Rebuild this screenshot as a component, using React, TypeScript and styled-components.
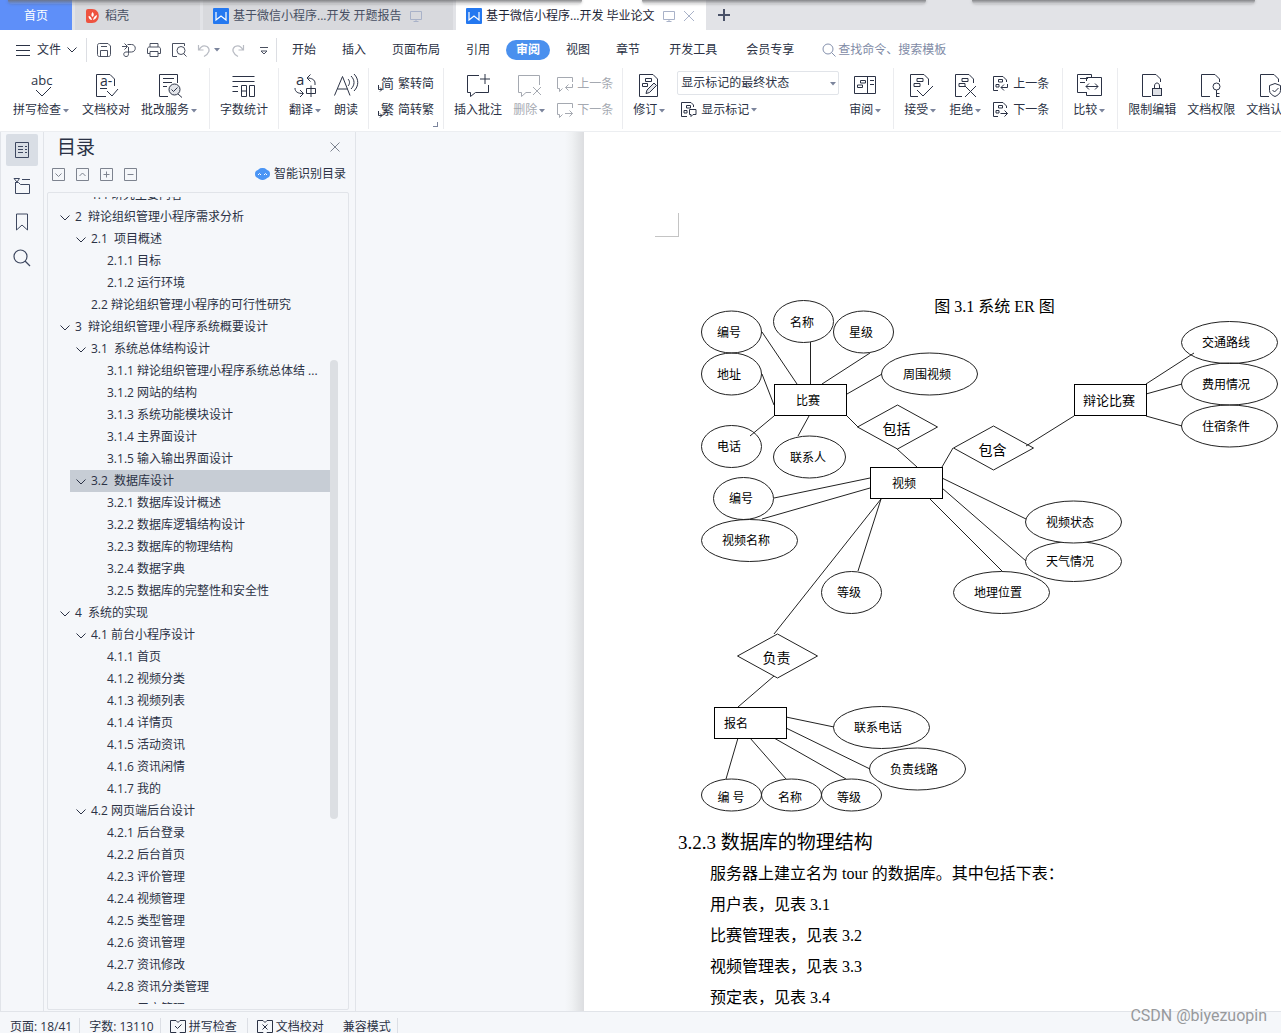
import React from "react";
import styled, { createGlobalStyle, css } from "styled-components";

const ink = "#2b3245";
const muted = "#a5a9b1";
const line = "#e1e4e9";
const paneBg = "#f5f7fa";

const GlobalStyle = createGlobalStyle`
  *, *::before, *::after { box-sizing: border-box; }
  body {
    margin: 0;
    font-family: "Open Sans", "Noto Sans CJK SC", sans-serif;
    font-size: 12px;
    line-height: 16px;
    color: ${ink};
    overflow: hidden;
  }
  button, input, select { font: inherit; color: inherit; }
  button { border: 0; padding: 0; background: none; white-space: nowrap; }
  ul { list-style: none; margin: 0; padding: 0; }
  svg { display: block; flex: none; overflow: visible; }
`;

const Shell = styled.div`
  position: relative;
  display: flex;
  flex-direction: column;
  height: 100vh;
  background: #fff;
`;

/* ---------- window tabs ---------- */

const TabStrip = styled.header`
  display: flex;
  gap: 3px;
  height: 30px;
  background: #e2e3e7;
`;

const Tab = styled.button<{ $kind?: "home" | "active"; $width: number }>`
  display: flex;
  align-items: center;
  gap: 4px;
  width: ${(p) => p.$width}px;
  padding: 1px 10px 0;
  background: #d8d9dd;
  color: #474f62;
  ${(p) => p.$kind === "home" && css`background: #5e8ff9; color: #fff; justify-content: center;`}
  ${(p) => p.$kind === "active" && css`background: #fff; color: #1d2435;`}
`;

const TabIcons = styled.span`
  display: flex;
  align-items: center;
  gap: 8px;
  margin-left: 4px;
  color: #a9b2c8;
`;

const AddTab = styled.button`
  display: grid;
  place-items: center;
  width: 30px;
  color: #4a5268;
`;

const TopShade = styled.div`
  position: absolute;
  top: 0;
  left: 0;
  right: 0;
  display: flex;
  padding: 0 26px 0 8px;
  height: 4px;
  pointer-events: none;
`;

const Shade = styled.span<{ $grow: number }>`
  flex: ${(p) => p.$grow} 0 0;
  border-radius: 0 0 4px 4px;
  background: linear-gradient(rgba(110, 111, 114, 0.8), rgba(150, 150, 152, 0.2));
  box-shadow: 0 0 3px rgba(90, 90, 90, 0.4);
`;

const ShadeGap = styled.span<{ $grow: number }>`
  flex: ${(p) => p.$grow} 0 0;
`;

/* ---------- menu bar ---------- */

const MenuBar = styled.div`
  display: flex;
  align-items: center;
  height: 37px;
  padding: 2px 0 0 15px;
`;

const FileButton = styled.button`
  display: flex;
  align-items: center;
  gap: 6px;
`;

const Divider = styled.span<{ $lead: number }>`
  width: 1px;
  height: 24px;
  margin-left: ${(p) => p.$lead}px;
  background: #dcdee3;
`;

const QuickTools = styled.div`
  display: flex;
  align-items: center;
  gap: 9px;
  padding-left: 9px;
  color: #4a5060;
`;

const QuickButton = styled.button<{ $faded?: boolean }>`
  display: flex;
  align-items: center;
  color: ${(p) => (p.$faded ? "#b9bcc4" : "inherit")};
`;

const MenuNav = styled.nav`
  display: flex;
  align-items: center;
  margin-left: 2px;
`;

const MenuItem = styled.button<{ $spaced?: boolean }>`
  height: 20px;
  padding: 0 13px 0 ${(p) => (p.$spaced ? 16 : 13)}px;
  &[aria-current="page"] {
    margin: 0 3px;
    padding: 0 10px;
    border-radius: 10px;
    background: #4a90ee;
    color: #fff;
    font-weight: 700;
  }
`;

const SearchBox = styled.label`
  display: flex;
  align-items: center;
  gap: 2px;
  margin-left: 15px;
  color: #8591ad;
  input {
    width: 160px;
    height: 20px;
    border: 0;
    padding: 0;
    outline: 0;
    background: none;
  }
  input::placeholder { color: #7f8ba6; opacity: 1; }
`;

/* ---------- ribbon ---------- */

const Ribbon = styled.div`
  position: relative;
  z-index: 1;
  display: flex;
  height: 65px;
  padding: 1px 0 2px 3px;
  overflow: hidden;
  border-bottom: 1px solid #eceef1;
  flex: none;
`;

const Group = styled.div`
  display: flex;
  flex: none;
  align-items: flex-start;
  gap: 11px;
  padding: 4px 10px 0;
  position: relative;
  & + & { border-left: 1px solid #ebecef; }
`;

const BigButton = styled.button<{ $off?: boolean }>`
  display: flex;
  flex-direction: column;
  align-items: center;
  gap: 4px;
  color: ${(p) => (p.$off ? muted : ink)};
  > svg { margin: 0 -1px; }
`;

const LabelRow = styled.span`
  display: flex;
  align-items: center;
`;

const CaretBox = styled.span`
  display: flex;
  justify-content: center;
  width: 10px;
  color: #7b849c;
`;

const SmallStack = styled.div<{ $min?: number }>`
  display: flex;
  flex-direction: column;
  gap: 2px;
  margin: -1px -1px 0;
  min-width: ${(p) => p.$min ?? 0}px;
`;

const SmallButton = styled.button<{ $off?: boolean; $inset?: boolean }>`
  display: flex;
  align-items: center;
  gap: 4px;
  height: 24px;
  padding: 1px 0 0 ${(p) => (p.$inset ? 4 : 0)}px;
  color: ${(p) => (p.$off ? muted : ink)};
`;

const SelectWrap = styled.label`
  position: relative;
  display: flex;
  align-items: center;
  select {
    appearance: none;
    width: 162px;
    height: 24px;
    padding: 0 20px 0 3px;
    border: 1px solid ${line};
    border-radius: 2px;
    background: #fff;
    outline: 0;
  }
  ${CaretBox} {
    position: absolute;
    right: 1px;
    pointer-events: none;
  }
`;

const Launcher = styled.span`
  position: absolute;
  right: 5px;
  bottom: 2px;
  width: 5px;
  height: 5px;
  border: solid #7b849c;
  border-width: 0 1px 1px 0;
`;

/* ---------- body ---------- */

const Body = styled.main`
  display: flex;
  flex: 1;
  min-height: 0;
  background: ${paneBg};
  border-left: 1px solid ${line};
`;

const Rail = styled.nav`
  display: flex;
  flex-direction: column;
  gap: 4px;
  width: 42px;
  padding: 2px 5px;
  color: #3e4860;
  flex: none;
`;

const RailButton = styled.button<{ $on?: boolean }>`
  display: grid;
  place-items: center;
  width: 32px;
  height: 32px;
  border-radius: 2px;
  background: ${(p) => (p.$on ? "#d9dee5" : "none")};
`;

const Outline = styled.aside`
  display: flex;
  flex-direction: column;
  flex: none;
  width: 313px;
  padding: 0 6px 1px 3px;
  border: solid ${line};
  border-width: 0 1px;
`;

const OutlineHead = styled.div`
  display: flex;
  align-items: center;
  justify-content: space-between;
  height: 30px;
  padding: 0 9px 0 10px;
  h2 {
    margin: 0;
    font-size: 19px;
    line-height: 28px;
    font-weight: 400;
  }
  button { color: #7d838f; }
`;

const OutlineTools = styled.div`
  display: flex;
  align-items: center;
  gap: 11px;
  height: 30px;
  padding: 0 3px 6px 5px;
  color: #7d838f;
`;

const SmartButton = styled.button`
  display: flex;
  align-items: center;
  gap: 4px;
  margin-left: auto;
  color: ${ink};
`;

const TreeBox = styled.div`
  display: flex;
  flex: 1;
  min-height: 0;
  padding: 4px 10px 5px 6px;
  border: 1px solid ${line};
  border-radius: 2px;
`;

const TreeView = styled.div`
  flex: 1;
  min-width: 0;
  overflow: hidden;
  ul { margin-top: -13px; }
`;

const TreeRow = styled.li<{ $level: number; $on?: boolean }>`
  display: flex;
  align-items: center;
  height: 22px;
  margin-left: ${(p) => (p.$level - 1) * 16}px;
  background: ${(p) => (p.$on ? "#c7cdd5" : "none")};
  a {
    color: inherit;
    text-decoration: none;
    white-space: pre;
  }
`;

const Twist = styled.span`
  display: flex;
  justify-content: center;
  width: 21px;
  flex: none;
  padding-top: 2px;
`;

const ScrollTrack = styled.div`
  display: flex;
  flex-direction: column;
  width: 8px;
  padding-top: 2px;
`;

const ScrollThumb = styled.span`
  flex: 0 0 57%;
  border-radius: 4px;
  background: #dcdfe3;
`;

const ScrollLead = styled.span`
  flex: 0 0 20%;
`;

const Desk = styled.section`
  display: flex;
  flex: 1;
  min-width: 0;
  overflow: hidden;
`;

const Gutter = styled.div`
  flex: none;
  width: 228px;
  background: linear-gradient(to left, #dcdde0 0, #e5e7e9 6px, #eff1f3 12px, ${paneBg} 19px);
`;

const Paper = styled.article`
  flex: none;
  width: 821px;
  padding: 81px 94px 0;
  background: #fff;
  color: #000;
  font-family: "Liberation Serif", "Noto Sans CJK SC", serif;
  font-size: 16px;
  line-height: 31px;
  h3 {
    margin: 0;
    font-size: 19px;
    line-height: 31px;
    font-weight: 400;
  }
  p { margin: 0; text-indent: 2em; }
`;

const CropMark = styled.div`
  width: 24px;
  height: 24px;
  margin: 0 0 54px -23px;
  border: solid #c4c4c4;
  border-width: 0 1px 1px 0;
`;

const Figure = styled.figure`
  margin: 0;
  figcaption { text-align: center; }
  svg { margin-top: -26px; }
  text {
    font-family: "Liberation Serif", "Noto Sans CJK SC", serif;
    fill: #000;
    stroke: none;
    text-anchor: middle;
  }
`;

/* ---------- status bar ---------- */

const StatusBar = styled.footer`
  position: relative;
  flex: none;
  height: 22px;
  border-top: 1px solid ${line};
  background: ${paneBg};
`;

const StatusItems = styled.div`
  display: flex;
  align-items: center;
  height: 30px;
  padding-left: 10px;
`;

const StatusItem = styled.button<{ $bar?: boolean; $pad: number }>`
  display: flex;
  align-items: center;
  gap: 3px;
  height: 18px;
  margin-right: 9px;
  padding-right: ${(p) => p.$pad}px;
  border-right: 1px solid ${(p) => (p.$bar ? "#dcdfe5" : "transparent")};
`;

const Watermark = styled.span`
  position: absolute;
  right: 14px;
  top: -7px;
  font-family: Roboto, "Open Sans", sans-serif;
  font-size: 16px;
  line-height: 22px;
  color: #97999c;
`;

/* ---------- icons ---------- */

type IconProps = { w?: number; h?: number; d?: string; sw?: number; children?: React.ReactNode };

const Icon = ({ w = 26, h = w, d, sw = 1, children }: IconProps) => (
  <svg width={w} height={h} viewBox={`0 0 ${w} ${h}`} fill="none" stroke="currentColor" strokeWidth={sw} aria-hidden="true">
    {children}
    {d && <path d={d} />}
  </svg>
);

const Caret = () => (
  <CaretBox>
    <svg width="6" height="3" viewBox="0 0 6 3" aria-hidden="true"><path d="M0 0h6L3 3.500z" fill="currentColor" /></svg>
  </CaretBox>
);

const glyph = { fill: "currentColor", stroke: "none" } as const;
const marks = "M9 6.500h6v3H9zM6 11.500h6v3H6z";
const page = "M12 24.500H3.500V2.500H17L21.500 7V10";

const icons: Record<string, React.ReactNode> = {
  spell: <Icon d="M7 18l6 6 9-9"><text x="2" y="13" fontSize="13" {...glyph}>abc</text></Icon>,
  proof: <Icon d="M13 24.500H3.500V2.500H17L21.500 7V14M7 16.500h7M14 19l5 5 6-7"><text x="7" y="14" fontSize="14" {...glyph}>a-</text></Icon>,
  review: (
    <Icon d="M11 24.500H2.500V2.500H20.500V11M6 6.500H17M6 10.500H15M6 14.500H10M21 22l4 3.500M14.500 17.500l2 2 4-4">
      <circle cx="17.500" cy="17.500" r="5.500" fill="#e3e5ea" />
    </Icon>
  ),
  count: <Icon d="M1.500 4.500H23.500M1.500 9.500H23.500M1.500 14.500H7M1.500 19.500H7M10.500 13.500h5v11h-5zM10.500 19h5M18.500 13.500h5v11h-5z" />,
  translate: (
    <Icon d="M22 13V11C22 8 19 6 14 6M17.500 2.500L14 6l3.500 3.500M2 16C2 20 5 21.500 10 21.500M7 18l3.500 3.500L7 25M13.500 16.500h9v5h-9zM18 13.500v11.500">
      <text x="3" y="13" fontSize="15" {...glyph}>a</text>
    </Icon>
  ),
  read: <Icon d="M1.500 23.500L9.500 4.500 17 23.500M4.500 17H14.500M15 7c2 2 2 5 0 7M18 4c4 4 4 9 0 13M21 2c5 5 5 12 0 17" />,
  insert: <Icon d="M14 3.500H2.500V20.500H5.500V24.500L10.500 20.500H23.500V13M20 2v10M15 7h10" />,
  remove: <Icon d="M22.500 13V3.500H1.500V20.500H4.500V24.500L9 20.500H14M16 15l8 8M24 15l-8 8" />,
  track: (
    <Icon d="M2.500 2.500H16L20.500 7V24.500H2.500zM8.500 6.500h6v3h-6zM5.500 11.500h5v3h-5z">
      <path d="M9 21.500l1-3.500 7-7 2.500 2.500-7 7z" fill="#e3e5ea" />
    </Icon>
  ),
  pane: <Icon d="M1.500 4.500H22.500V21.500H1.500zM14.500 4.500v17M17 8.500h4M17 12.500h4M7.500 8.500h5v2.500h-5zM4.500 13h5v2.500h-5z" />,
  accept: <Icon d={`M10 24.500H2.500V2.500H16L20.500 7V13${marks}M9 18l6 6 10-10`} />,
  reject: <Icon d={`M9 24.500H2.500V2.500H16L20.500 7V11${marks}M12 14l11 11M23 14L12 25`} />,
  compare: <Icon d="M9 20.500H.500V2.500H14.500V5M9.500 9V5.500H24.500V23.500H9.500V20M3 6.500h8M3 10.500h5M9 14.500H21M12 11.500l-3 3 3 3M18 11.500l3 3-3 3" />,
  limit: (
    <Icon d={`${page}M15.500 16.500V14c0-4 5-4 5 0v2.500`}>
      <rect x="13.500" y="16.500" width="9" height="7" fill="#dfe1e6" />
    </Icon>
  ),
  rights: <Icon d={`${page}M18.500 18v7M18.500 21.500h3M18.500 24.500h3`}><circle cx="18.500" cy="14.500" r="3.500" /></Icon>,
  certify: <Icon d={`${page}M18 11.500l5.500 2v5c0 3-3 5-5.500 6-2.500-1-5.500-3-5.500-6v-5zM15.500 18l2 2 4-4`} />,
  toSimple: <Icon w={16} d="M.500 9v4.500H4M2 11.500L4 13.500l-2 2"><text x="3" y="12" fontSize="13" {...glyph}>简</text></Icon>,
  toTrad: <Icon w={16} d="M.500 9v4.500H4M2 11.500L4 13.500l-2 2"><text x="3" y="12" fontSize="13" {...glyph}>繁</text></Icon>,
  prevNote: <Icon w={16} d="M15.500 6V1.500H.500V12.500H2.500V15.500L5.500 12.500M15.500 8v3.500H8.500M11.500 8.500l-3 3 3 3" />,
  nextNote: <Icon w={16} d="M15.500 6V1.500H.500V12.500H2.500V15.500L5.500 12.500M8 11.500H15.500M12.500 8.500l3 3-3 3" />,
  showMarks: <Icon w={16} d="M6 14.500H.500V.500H10L12.500 3V5M5.500 3.500h4V6h-4zM3 8.500h3v2.500H3zM8.500 7.500h6.500v5h-3l-2 2v-2h-1.500z" />,
  prevEdit: <Icon w={16} d="M5 14.500H.500V.500H10L13.500 4V6M5.500 3.500h4V6h-4zM3 8.500h3v2.500H3zM14.500 8v3.500H8M11 8.500l-3 3 3 3" />,
  nextEdit: <Icon w={16} d="M5 14.500H.500V.500H10L13.500 4V6M5.500 3.500h4V6h-4zM3 8.500h3v2.500H3zM7.500 11.500H14.500M11.500 8.500l3 3-3 3" />,
  menu: <Icon w={16} d="M1 3.500h14M1 8.500h14M1 13.500h14" />,
  chevron: <Icon w={10} h={6} d="M.500.500L5 5 9.500.500" />,
  save: <Icon w={16} d="M3.500 1.500H12L14.500 4v8.500c0 1-.5 2-2 2h-9c-1.500 0-2-1-2-2v-9c0-1 .5-2 2-2zM4.500 14V8.500h7V14M5 4.500h6" />,
  share: <Icon w={16} d="M1 4.500h5M3.500 1.500l3 3-3 3M6.500 2.500h4c5 0 5 7.500 0 7.500H5c-3 0-3 4.500 0 4.500 2 0 2.500-1 2.500-3V5" />,
  print: <Icon w={16} d="M4 5V1.500h8V5M4 11.500H1.500V7c0-1 .5-2 2-2h9c1.500 0 2 1 2 2v4.500H12M4 9.500h8v5H4z" />,
  preview: <Icon w={16} d="M6 14.500H1.500v-13h12V4M12.500 11.500l3 3"><circle cx="10" cy="8.500" r="4" /></Icon>,
  undo: <Icon w={16} sw={1.2} d="M2.500 3v5h5M3 8c2-4 5-5 8-3.500 4 3 2 7-3 10" />,
  redo: <Icon w={16} sw={1.2} d="M12.500 3v5h-5M12 8c-2-4-5-5-8-3.500-4 3-2 7 3 10" />,
  more: <Icon w={16} d="M4 5.500h8M5 9l3 3 3-3z" />,
  search: <Icon w={14} d="M9.500 9.500l4 4"><circle cx="6" cy="6" r="5" /></Icon>,
  close: <Icon w={12} d="M1 1l10 10M11 1L1 11" />,
  closeSmall: <Icon w={10} d="M.500.500l9 9M9.500.500l-9 9" />,
  screen: <Icon w={12} d="M.500 1.500h11v8H.500zM6 9.500v2M3.500 11.500h5" />,
  plus: <Icon w={14} sw={2} d="M7 1v12M1 7h12" />,
  railDoc: <Icon w={16} d="M1.500.500h13v15h-13zM4 4.500h5M4 7.500h5M4 10.500h5M11 4.500h2M11 7.500h2M11 10.500h2" />,
  railFolder: <Icon w={18} d="M1 1.500h5.500L4 5zM9 2.500h8M2.500 5v11.500h14v-9h-9l-2-2h-3" />,
  railMark: <Icon w={16} h={18} d="M2.500 1h11v16L8 12 2.500 17z" />,
  railSearch: <Icon w={18} sw={1.2} d="M12 12l5 5"><circle cx="7.500" cy="7.500" r="6.500" /></Icon>,
  expand: <Icon w={13} d="M.500.500h12v12H.500zM3.500 5.500l3 3 3-3" />,
  collapse: <Icon w={13} d="M.500.500h12v12H.500zM3.500 8l3-3 3 3" />,
  add: <Icon w={13} d="M.500.500h12v12H.500zM3.500 6.500h6M6.500 3.500v6" />,
  minus: <Icon w={13} d="M.500.500h12v12H.500zM3.500 6.500h6" />,
  bookCheck: <Icon w={16} d="M6 1.500H.500v12H6l2 2 2-2h5.500v-12H10l-2 2zM5 7l2.500 2.500 4-4" />,
  bookCross: <Icon w={16} d="M6 1.500H.500v12H6l2 2 2-2h5.500v-12H10l-2 2zM5.500 5.500l5 5M10.500 5.500l-5 5" />,
};

const WriterLogo = () => (
  <svg width="16" height="16" viewBox="0 0 16 16" aria-hidden="true">
    <rect width="16" height="16" rx="1" fill="#2478f0" />
    <path d="M3 4v8l5-4 5 4V4" fill="none" stroke="#fff" strokeWidth="1.200" />
  </svg>
);

const DocerLogo = () => (
  <svg width="16" height="14" viewBox="-1 0 16 14" aria-hidden="true">
    <path d="M0 2Q0 0 2 0h4c9 0 9 14 0 14H2Q0 14 0 12z" fill="#ee5340" />
    <path d="M6.500 3c2 2 1.500 4 0 5C5 7 5 5 6.500 3zM2.500 7c2 0 3 2 3.500 4-2 0-3.500-1.500-3.500-4zM11 6c-2 .5-3.500 2.500-4 5 2.500-.5 4-2.500 4-5z" fill="#fff" />
  </svg>
);

const SmartLogo = () => (
  <svg width="15" height="13" viewBox="0 0 15 13" aria-hidden="true">
    <rect x="2" y="0" width="11" height="12" rx="5" fill="#4a95f5" />
    <rect y="2" width="15" height="8" rx="4" fill="#4a95f5" />
    <path d="M3 7l1.500-1.500L6 7M9 7l1.500-1.500L12 7" fill="none" stroke="#fff" />
  </svg>
);

/* ---------- data ---------- */

type Node = [level: number, text: string, open?: boolean];

const outline: Node[] = [
  [2, "1.4 研究主要内容"],
  [1, "2  辩论组织管理小程序需求分析", true],
  [2, "2.1  项目概述", true],
  [3, "2.1.1 目标"],
  [3, "2.1.2 运行环境"],
  [2, "2.2 辩论组织管理小程序的可行性研究"],
  [1, "3  辩论组织管理小程序系统概要设计", true],
  [2, "3.1  系统总体结构设计", true],
  [3, "3.1.1 辩论组织管理小程序系统总体结 ..."],
  [3, "3.1.2 网站的结构"],
  [3, "3.1.3 系统功能模块设计"],
  [3, "3.1.4 主界面设计"],
  [3, "3.1.5 输入输出界面设计"],
  [2, "3.2  数据库设计", true],
  [3, "3.2.1 数据库设计概述"],
  [3, "3.2.2 数据库逻辑结构设计"],
  [3, "3.2.3 数据库的物理结构"],
  [3, "3.2.4 数据字典"],
  [3, "3.2.5 数据库的完整性和安全性"],
  [1, "4  系统的实现", true],
  [2, "4.1 前台小程序设计", true],
  [3, "4.1.1 首页"],
  [3, "4.1.2 视频分类"],
  [3, "4.1.3 视频列表"],
  [3, "4.1.4 详情页"],
  [3, "4.1.5 活动资讯"],
  [3, "4.1.6 资讯闲情"],
  [3, "4.1.7 我的"],
  [2, "4.2 网页端后台设计", true],
  [3, "4.2.1 后台登录"],
  [3, "4.2.2 后台首页"],
  [3, "4.2.3 评价管理"],
  [3, "4.2.4 视频管理"],
  [3, "4.2.5 类型管理"],
  [3, "4.2.6 资讯管理"],
  [3, "4.2.7 资讯修改"],
  [3, "4.2.8 资讯分类管理"],
  [3, "4.2.9 用户管理"],
];

const current = "3.2  数据库设计";

/* cx, cy, rx, ry, label, label x, label y */
const ellipses: [number, number, number, number, string, number, number][] = [
  [731.5, 332, 30, 21, "编号", 729, 332],
  [803.5, 321.5, 30, 21, "名称", 802, 322],
  [863.5, 332, 30, 21, "星级", 861, 332],
  [731.5, 374, 30, 21, "地址", 729, 374],
  [929.5, 374, 48, 21, "周围视频", 927, 374],
  [731.5, 446.5, 30, 21, "电话", 729, 446],
  [809.5, 457, 36, 21, "联系人", 808, 457],
  [743.5, 498.5, 30, 21, "编号", 741, 498],
  [749.5, 540.5, 48, 21, "视频名称", 746, 540],
  [851.5, 592.5, 30, 21, "等级", 849, 592],
  [1001.5, 592.5, 48, 21, "地理位置", 998, 592],
  [1073.5, 561.5, 48, 20, "天气情况", 1070, 561],
  [1073.5, 522, 48, 21, "视频状态", 1070, 522],
  [1229.5, 342.5, 48, 21, "交通路线", 1226, 342],
  [1229.5, 384, 48, 21, "费用情况", 1226, 384],
  [1229.5, 426, 48, 21, "住宿条件", 1226, 426],
  [881.5, 727.5, 48, 21, "联系电话", 878, 727],
  [917.5, 769, 48, 21, "负责线路", 914, 769],
  [731.5, 795, 30, 16, "编 号", 731, 797],
  [791.5, 795, 30, 16, "名称", 790, 797],
  [851.5, 795, 30, 16, "等级", 849, 797],
];

const boxes: [number, number, string, number, number, number][] = [
  [774.5, 384.5, "比赛", 808, 400, 12],
  [870.5, 467.5, "视频", 904, 483, 12],
  [1074.5, 384.5, "辩论比赛", 1109, 400, 13],
  [714.5, 707.5, "报名", 736, 723, 12],
];

const diamonds: [number, number, string][] = [
  [897.5, 427, "包括"],
  [993.5, 448, "包含"],
  [777.5, 656, "负责"],
];

const links =
  "M762 332L797 384M810.500 342V384M870 353L822 384M762 374L774 405M882 374L847 394" +
  "M774 416L750 436M809 416L798 436M847 416L858 427M897 449L917 467M942 467L953 448" +
  "M1026 446L1074 416M1146 384L1194 353M1146 394L1182 384M1146 416L1182 426" +
  "M774 498L870 478M762 519L870 488M881 499L774 634M881 499L858 571M930 499L1002 571" +
  "M942 478L1026 519M942 488L1026 561M774 676L738 707M786 717L834 727M786 728L870 769" +
  "M738 738L726 779M750 738L786 779M774 738L846 779";

const ErDiagram = () => (
  <svg width="633" height="531" viewBox="678 296 633 531" fill="#fff" stroke="#222" role="img" aria-label="系统 ER 图">
    {ellipses.map(([cx, cy, rx, ry, label, x, y], i) => (
      <g key={i}>
        <ellipse cx={cx} cy={cy} rx={rx} ry={ry} fill={label === "视频状态" ? "#fff" : "none"} />
        <text x={x} y={y + 5} fontSize="12">{label}</text>
      </g>
    ))}
    <path d={links} fill="none" />
    {diamonds.map(([cx, cy, label]) => (
      <g key={label}>
        <path d={`M${cx - 40} ${cy}l40-22 40 22-40 22z`} fill="none" />
        <text x={cx - 1} y={cy + 7} fontSize="14">{label}</text>
      </g>
    ))}
    {boxes.map(([x, y, label, tx, ty, size]) => (
      <g key={label}>
        <rect x={x} y={y} width="72" height="31" stroke="#000" />
        <text x={tx} y={ty + 5} fontSize={size}>{label}</text>
      </g>
    ))}
  </svg>
);

/* ---------- parts ---------- */

type ToolProps = { icon: string; label: string; caret?: boolean; off?: boolean; inset?: boolean };

const Big = ({ icon, label, caret, off }: ToolProps) => (
  <BigButton $off={off} disabled={off}>
    {icons[icon]}
    <LabelRow>{label}{caret && <Caret />}</LabelRow>
  </BigButton>
);

const Small = ({ icon, label, caret, off, inset }: ToolProps) => (
  <SmallButton $off={off} $inset={inset} disabled={off}>
    {icons[icon]}
    <LabelRow>{label}{caret && <Caret />}</LabelRow>
  </SmallButton>
);

const menus = ["开始", "插入", "页面布局", "引用", "审阅", "视图", "章节", "开发工具", "会员专享"];

export default function App() {
  return (
    <Shell>
      <GlobalStyle />
      <TabStrip>
        <Tab $kind="home" $width={72}>首页</Tab>
        <Tab $width={125}><DocerLogo />稻壳</Tab>
        <Tab $width={250}>
          <WriterLogo />基于微信小程序...开发 开题报告
          <TabIcons>{icons.screen}</TabIcons>
        </Tab>
        <Tab $kind="active" $width={250}>
          <WriterLogo />基于微信小程序...开发 毕业论文
          <TabIcons>{icons.screen}{icons.close}</TabIcons>
        </Tab>
        <AddTab aria-label="新建标签">{icons.plus}</AddTab>
      </TabStrip>
      <TopShade>
        <Shade $grow={574} /><ShadeGap $grow={60} /><Shade $grow={284} /><ShadeGap $grow={46} /><Shade $grow={283} />
      </TopShade>

      <MenuBar>
        <FileButton>{icons.menu}文件 {icons.chevron}</FileButton>
        <Divider $lead={9} />
        <QuickTools>
          <QuickButton aria-label="保存">{icons.save}</QuickButton>
          <QuickButton aria-label="输出">{icons.share}</QuickButton>
          <QuickButton aria-label="打印">{icons.print}</QuickButton>
          <QuickButton aria-label="打印预览">{icons.preview}</QuickButton>
          <QuickButton $faded aria-label="撤销">{icons.undo}<Caret /></QuickButton>
          <QuickButton $faded aria-label="恢复">{icons.redo}</QuickButton>
          <QuickButton aria-label="更多">{icons.more}</QuickButton>
        </QuickTools>
        <Divider $lead={4} />
        <MenuNav>
          {menus.map((m, i) => (
            <MenuItem key={m} $spaced={i > 6} aria-current={m === "审阅" ? "page" : undefined}>{m}</MenuItem>
          ))}
        </MenuNav>
        <SearchBox>
          {icons.search}
          <input type="text" placeholder="查找命令、搜索模板" aria-label="查找命令、搜索模板" />
        </SearchBox>
      </MenuBar>

      <Ribbon>
        <Group>
          <Big icon="spell" label="拼写检查" caret />
          <Big icon="proof" label="文档校对" />
          <Big icon="review" label="批改服务" caret />
        </Group>
        <Group><Big icon="count" label="字数统计" /></Group>
        <Group>
          <Big icon="translate" label="翻译" caret />
          <Big icon="read" label="朗读" />
        </Group>
        <Group>
          <SmallStack>
            <Small icon="toSimple" label="繁转简" />
            <Small icon="toTrad" label="简转繁" />
          </SmallStack>
          <Launcher />
        </Group>
        <Group>
          <Big icon="insert" label="插入批注" />
          <Big icon="remove" label="删除" caret off />
          <SmallStack>
            <Small icon="prevNote" label="上一条" off />
            <Small icon="nextNote" label="下一条" off />
          </SmallStack>
        </Group>
        <Group>
          <Big icon="track" label="修订" caret />
          <SmallStack>
            <SelectWrap>
              <select aria-label="显示状态" defaultValue="final">
                <option value="final">显示标记的最终状态</option>
              </select>
              <Caret />
            </SelectWrap>
            <Small icon="showMarks" label="显示标记" caret inset />
          </SmallStack>
          <Big icon="pane" label="审阅" caret />
        </Group>
        <Group>
          <Big icon="accept" label="接受" caret />
          <Big icon="reject" label="拒绝" caret />
          <SmallStack $min={60}>
            <Small icon="prevEdit" label="上一条" />
            <Small icon="nextEdit" label="下一条" />
          </SmallStack>
        </Group>
        <Group><Big icon="compare" label="比较" caret /></Group>
        <Group>
          <Big icon="limit" label="限制编辑" />
          <Big icon="rights" label="文档权限" />
          <Big icon="certify" label="文档认证" />
        </Group>
      </Ribbon>

      <Body>
        <Rail>
          <RailButton $on aria-label="目录">{icons.railDoc}</RailButton>
          <RailButton aria-label="章节">{icons.railFolder}</RailButton>
          <RailButton aria-label="书签">{icons.railMark}</RailButton>
          <RailButton aria-label="查找">{icons.railSearch}</RailButton>
        </Rail>
        <Outline>
          <OutlineHead>
            <h2>目录</h2>
            <button aria-label="关闭">{icons.closeSmall}</button>
          </OutlineHead>
          <OutlineTools>
            <button aria-label="展开">{icons.expand}</button>
            <button aria-label="收起">{icons.collapse}</button>
            <button aria-label="增加">{icons.add}</button>
            <button aria-label="减少">{icons.minus}</button>
            <SmartButton><SmartLogo />智能识别目录</SmartButton>
          </OutlineTools>
          <TreeBox>
            <TreeView>
              <ul>
                {outline.map(([level, text, open]) => (
                  <TreeRow key={text} $level={level} $on={text === current}>
                    <Twist>{open && icons.chevron}</Twist>
                    <a href="#outline">{text}</a>
                  </TreeRow>
                ))}
              </ul>
            </TreeView>
            <ScrollTrack><ScrollLead /><ScrollThumb /></ScrollTrack>
          </TreeBox>
        </Outline>
        <Desk>
          <Gutter />
          <Paper>
            <CropMark />
            <Figure>
              <figcaption>图 3.1 系统 ER 图</figcaption>
              <ErDiagram />
            </Figure>
            <h3>3.2.3 数据库的物理结构</h3>
            <p>服务器上建立名为 tour 的数据库。其中包括下表：</p>
            <p>用户表，见表 3.1</p>
            <p>比赛管理表，见表 3.2</p>
            <p>视频管理表，见表 3.3</p>
            <p>预定表，见表 3.4</p>
          </Paper>
        </Desk>
      </Body>

      <StatusBar>
        <StatusItems>
          <StatusItem $bar $pad={7}>页面: 18/41</StatusItem>
          <StatusItem $bar $pad={6}>字数: 13110</StatusItem>
          <StatusItem $bar $pad={10}>{icons.bookCheck}拼写检查</StatusItem>
          <StatusItem $pad={9}>{icons.bookCross}文档校对</StatusItem>
          <StatusItem $bar $pad={6}>兼容模式</StatusItem>
        </StatusItems>
        <Watermark>CSDN @biyezuopin</Watermark>
      </StatusBar>
    </Shell>
  );
}
